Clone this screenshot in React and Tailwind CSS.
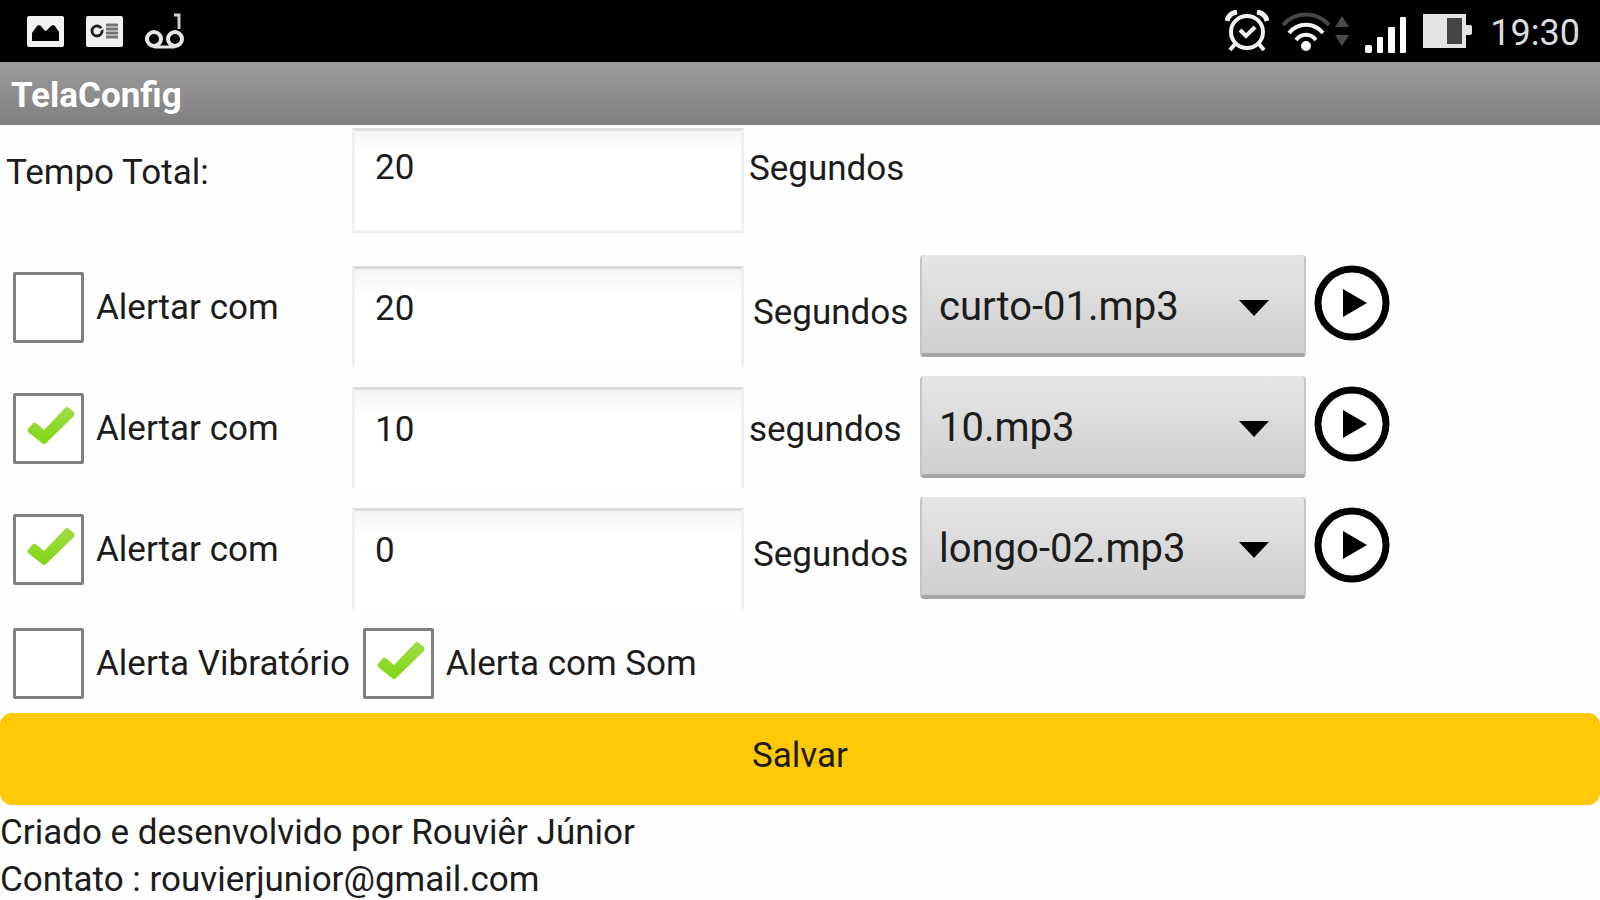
import React, { useState } from "react";

const SOUNDS = ["curto-01.mp3", "10.mp3", "longo-02.mp3"];

const INITIAL_ALERTS = [
  { id: "a1", on: false, seconds: "20", unit: "Segundos", sound: "curto-01.mp3" },
  { id: "a2", on: true, seconds: "10", unit: "segundos", sound: "10.mp3" },
  { id: "a3", on: true, seconds: "0", unit: "Segundos", sound: "longo-02.mp3" },
];

const StatusBar = () => (
  <header className="flex h-[62px] items-center justify-between bg-black pl-[27px] pr-5">
    <div className="flex items-center gap-[22px]">
      {/* picture */}
      <svg width="37" height="31" viewBox="0 0 37 31">
        <rect width="37" height="31" rx="2" fill="#f2f2f2" />
        <path d="M5 25V17l5-7 2-1 2 1 3 4 2 1 5-5 2-1 2 1 4 6v9z" fill="#000" />
      </svg>
      {/* contact card */}
      <svg width="37" height="31" viewBox="0 0 37 31">
        <rect width="37" height="31" rx="2" fill="#f0f0f0" />
        <circle cx="11" cy="15" r="5" fill="none" stroke="#222" strokeWidth="3" />
        <path d="M10 12l3 3 4-3" fill="none" stroke="#f0f0f0" strokeWidth="2" />
        <rect x="20" y="7" width="12" height="16" fill="#b4b4b4" />
        <path d="M20 9h12M20 13h12M20 17h12M20 21h12" stroke="#707070" strokeWidth="2" />
      </svg>
      {/* voicemail */}
      <svg width="40" height="38" viewBox="0 0 40 38">
        <g fill="none" stroke="#e6e6e6" strokeWidth="4">
          <circle cx="9" cy="27" r="7" />
          <circle cx="30" cy="27" r="7" />
          <path d="M9 35h21" strokeWidth="3" />
        </g>
        <path d="M29 3h5v14" fill="none" stroke="#d0d0d0" strokeWidth="3" />
      </svg>
    </div>
    <div className="flex items-center">
      {/* alarm */}
      <svg width="44" height="42" viewBox="0 0 44 42" fill="none" stroke="#f2f2f2">
        <circle cx="22" cy="22" r="16" strokeWidth="4" />
        <path d="M15 20l6 6 9-9" strokeWidth="4" />
        <path d="M2 11C3 6 6 3 12 2M42 11C41 6 38 3 32 2" strokeWidth="5" />
        <path d="M10 34l-5 6M34 34l5 6" strokeWidth="4" />
      </svg>
      {/* wifi */}
      <svg className="ml-3" width="50" height="42" viewBox="0 0 50 42" fill="none">
        <path d="M2 15C14 1 36 1 48 15" stroke="#484848" strokeWidth="4" />
        <path d="M8 23c9-11 25-11 34 0" stroke="#f5f5f5" strokeWidth="4" />
        <path d="M15 30c5-7 15-7 20 0" stroke="#f5f5f5" strokeWidth="4" />
        <circle cx="25" cy="36" r="5" fill="#fff" />
      </svg>
      <svg className="ml-1" width="14" height="32" viewBox="0 0 14 32">
        <path d="M7 1l7 11H0zM7 31l7-11H0z" fill="#4a4a4a" />
      </svg>
      {/* signal */}
      <svg className="ml-4 mt-2" width="42" height="38" viewBox="0 0 42 38" fill="#fff">
        <rect x="0" y="29" width="7" height="8" rx="2" />
        <rect x="12" y="21" width="6" height="16" rx="1" />
        <rect x="23" y="11" width="7" height="26" rx="1" />
        <rect x="35" y="1" width="6" height="36" rx="1" />
      </svg>
      {/* battery */}
      <svg className="ml-4" width="50" height="36" viewBox="0 0 50 36">
        <path d="M0 1h43v11h4q2 0 2 2v6q0 2-2 2h-4v13H0z" fill="#e4e4e4" />
        <rect x="24" y="5" width="15" height="26" fill="#444" />
      </svg>
      <time className="ml-[17px] pt-1 text-[36px] text-[#dcdcdc]">19:30</time>
    </div>
  </header>
);

// checkbox with its text
const Check = ({ checked, onChange, children }) => (
  <label className="flex items-center gap-3 pl-[13px] pt-[2px]">
    <span className="relative block size-[71px] shrink-0">
      <input
        type="checkbox"
        checked={checked}
        onChange={onChange}
        className="block size-full appearance-none rounded-xs border-3 border-[#808080] bg-white"
      />
      {checked && (
        <svg
          className="pointer-events-none absolute inset-0"
          width="71"
          height="71"
          viewBox="0 0 71 71"
        >
          <defs>
            <linearGradient id="tick" x1="0" y1="0" x2="0" y2="1">
              <stop offset="0" stopColor="#a0dc48" />
              <stop offset="1" stopColor="#7ed812" />
            </linearGradient>
          </defs>
          <path
            d="M15 36l5-6q2-1 4 1l7 6 21-22q2-2 4 0l5 4q1 2 0 4L33 50q-2 2-4 0L15 39q-1-2 0-3z"
            fill="url(#tick)"
          />
        </svg>
      )}
    </span>
    <span className="whitespace-nowrap">{children}</span>
  </label>
);

const PlayButton = ({ label }) => (
  <button type="button" aria-label={label} className="mt-[19px] ml-2 size-[76px]">
    <svg width="76" height="76" viewBox="0 0 76 76">
      <circle cx="38" cy="38" r="34" fill="#fff" stroke="#000" strokeWidth="7" />
      <path d="M29 24l24 14-24 14z" fill="#000" />
    </svg>
  </button>
);

const App = () => {
  const [total, setTotal] = useState("20");
  const [alerts, setAlerts] = useState(INITIAL_ALERTS);
  const [vibrate, setVibrate] = useState(false);
  const [sound, setSound] = useState(true);

  const update = (id, patch) => {
    setAlerts((prev) => prev.map((a) => (a.id === id ? { ...a, ...patch } : a)));
  };

  return (
    <div className="min-h-screen bg-[#fefefe] font-[Roboto,sans-serif] text-[35px] leading-[47px] text-[#1c1c1c]">
      <StatusBar />
      <h1 className="h-[63px] bg-linear-to-b from-[#9c9c9c] to-[#808080] pl-[11px] pt-[10px] font-bold text-white">
        TelaConfig
      </h1>

      <form onSubmit={(e) => e.preventDefault()}>
        <div className="grid h-[121px] grid-cols-[22%_24.5%_11%_24.1%_1fr]">
          <label htmlFor="total" className="pl-[6px] pt-6">
            Tempo Total:
          </label>
          <input
            id="total"
            type="text"
            value={total}
            onChange={(e) => setTotal(e.target.value)}
            className="mt-[3px] block h-[105px] w-full border-3 border-[#f0f0f0] border-t-[#e0e0e0] bg-linear-to-b from-[#f5f5f5] to-white to-20% pl-5 pb-[26px]"
          />
          <span className="pl-[5px] pt-5">Segundos</span>
        </div>

        {alerts.map((a) => (
          <div key={a.id} className="grid h-[121px] grid-cols-[22%_24.5%_11%_24.1%_1fr]">
            <Check checked={a.on} onChange={() => update(a.id, { on: !a.on })}>
              Alertar com
            </Check>
            <input
              type="text"
              aria-label="Tempo do alerta"
              value={a.seconds}
              onChange={(e) => update(a.id, { seconds: e.target.value })}
              className="mt-5 block h-[101px] w-full border-x-3 border-t-3 border-x-[#f0f0f0] border-t-[#dcdcdc] bg-linear-to-b from-[#f4f4f4] to-white to-25% pl-5 pb-[20px]"
            />
            <span className={a.unit === "Segundos" ? "pl-[9px] pt-[43px]" : "pl-[5px] pt-[39px]"}>
              {a.unit}
            </span>
            <div className="relative mt-[9px] h-[102px]">
              <select
                aria-label="Som do alerta"
                value={a.sound}
                onChange={(e) => update(a.id, { sound: e.target.value })}
                className="block size-full appearance-none rounded-sm border-x-2 border-b-4 border-x-[#c4c4c4] border-b-[#a6a6a6] bg-linear-to-b from-[#e6e6e6] to-[#cfcfcf] pt-[6px] pl-[17px] text-[40px] leading-[48px]"
              >
                {SOUNDS.map((s) => (
                  <option key={s}>{s}</option>
                ))}
              </select>
              <svg
                className="pointer-events-none absolute right-[37px] top-[45px]"
                width="30"
                height="16"
                viewBox="0 0 30 16"
              >
                <path d="M0 0h30L15 16z" fill="#000" />
              </svg>
            </div>
            <PlayButton label={`Tocar ${a.sound}`} />
          </div>
        ))}

        <div className="flex h-[104px] items-center pt-[2px]">
          <Check checked={vibrate} onChange={() => setVibrate(!vibrate)}>
            Alerta Vibratório
          </Check>
          <Check checked={sound} onChange={() => setSound(!sound)}>
            Alerta com Som
          </Check>
        </div>

        <button
          type="submit"
          className="block h-[92px] w-full rounded-xl bg-[#ffc905] pb-2 text-center"
        >
          Salvar
        </button>
      </form>

      <footer className="pt-1">
        <p>Criado e desenvolvido por Rouviêr Júnior</p>
        <p>Contato : rouvierjunior@gmail.com</p>
      </footer>
    </div>
  );
};

export default App;
